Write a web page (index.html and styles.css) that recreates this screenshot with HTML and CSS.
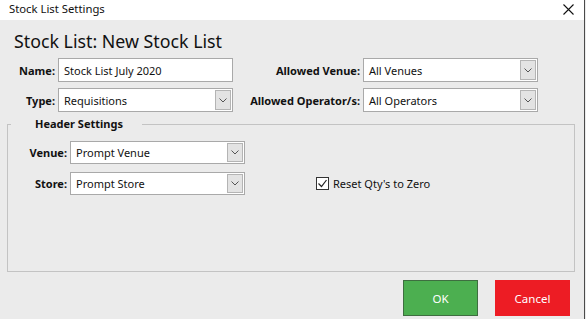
FILE: index.html
```html
<!DOCTYPE html>
<html lang="en">
<head>
    <meta charset="UTF-8">
    <meta name="viewport" content="width=device-width, initial-scale=1.0">
    <title>Stock List Settings</title>
    <link rel="stylesheet" href="styles.css">
</head>
<body>

    <div class="window">
        <div class="titlebar">
            <span class="title">Stock List Settings</span>
            <span class="close">
                <svg width="11" height="11" viewBox="0 0 11 11"><path d="M0.5 0.5 L10.5 10.5 M10.5 0.5 L0.5 10.5" stroke="#111" stroke-width="1.1" fill="none"/></svg>
            </span>
        </div>

        <div class="content">
            <h1 class="heading">Stock List: New Stock List</h1>

            <div class="top-form">
                <label class="lbl">Name:</label>
                <div class="field">Stock List July 2020</div>
                <label class="lbl">Allowed Venue:</label>
                <div class="field combo">
                    <span>All Venues</span>
                    <span class="drop"><svg width="8" height="5" viewBox="0 0 8 5"><path d="M0.5 0.5 L4 4 L7.5 0.5" stroke="#555" fill="none"/></svg></span>
                </div>

                <label class="lbl">Type:</label>
                <div class="field combo">
                    <span>Requisitions</span>
                    <span class="drop"><svg width="8" height="5" viewBox="0 0 8 5"><path d="M0.5 0.5 L4 4 L7.5 0.5" stroke="#555" fill="none"/></svg></span>
                </div>
                <label class="lbl">Allowed Operator/s:</label>
                <div class="field combo">
                    <span>All Operators</span>
                    <span class="drop"><svg width="8" height="5" viewBox="0 0 8 5"><path d="M0.5 0.5 L4 4 L7.5 0.5" stroke="#555" fill="none"/></svg></span>
                </div>
            </div>

            <fieldset class="group">
                <legend>Header Settings</legend>
                <div class="group-form">
                    <label class="lbl">Venue:</label>
                    <div class="field combo small">
                        <span>Prompt Venue</span>
                        <span class="drop"><svg width="8" height="5" viewBox="0 0 8 5"><path d="M0.5 0.5 L4 4 L7.5 0.5" stroke="#555" fill="none"/></svg></span>
                    </div>
                    <div></div>

                    <label class="lbl">Store:</label>
                    <div class="field combo small">
                        <span>Prompt Store</span>
                        <span class="drop"><svg width="8" height="5" viewBox="0 0 8 5"><path d="M0.5 0.5 L4 4 L7.5 0.5" stroke="#555" fill="none"/></svg></span>
                    </div>
                    <div class="check">
                        <span class="box"><svg width="11" height="11" viewBox="0 0 11 11"><path d="M1.5 5.5 L4.5 8.5 L9.5 2" stroke="#222" stroke-width="1.2" fill="none"/></svg></span>
                        <span>Reset Qty's to Zero</span>
                    </div>
                </div>
            </fieldset>

            <div class="footer">
                <button class="btn ok">OK</button>
                <button class="btn cancel">Cancel</button>
            </div>
        </div>
    </div>

</body>
</html>
```

FILE: styles.css
```css
body {
    margin: 0;
    background-color: #ebebeb;
    font-family: "Noto Sans", "Open Sans", sans-serif;
    font-size: 11px;
    color: #111;
}
.window {
    width: 584px;
    height: 319px;
    border-right: 1px solid #4a4a4a;
    background-color: #ebebeb;
}
.titlebar {
    height: 20px;
    background-color: #fff;
    display: flex;
    justify-content: space-between;
    align-items: flex-start;
}
.title {
    padding-left: 9px;
    line-height: 17px;
    font-size: 11.3px;
}
.close {
    padding: 3px 10px 0 0;
}
.heading {
    margin: 9px 0 5px 14px;
    font-size: 17.8px;
    font-weight: normal;
    line-height: 24px;
    color: #111;
}
.top-form {
    display: grid;
    grid-template-columns: 48px 175px 124px 175px;
    grid-auto-rows: 24px;
    column-gap: 3px;
    row-gap: 6px;
    padding-left: 7px;
}
.lbl {
    font-weight: bold;
    text-align: right;
    align-self: center;
    white-space: nowrap;
}
.field {
    background-color: #fff;
    border: 1px solid #a9a9a9;
    display: flex;
    align-items: center;
    justify-content: space-between;
    padding-left: 5px;
    box-sizing: border-box;
}
.combo {
    padding-right: 1px;
}
.drop {
    width: 16px;
    height: 20px;
    background-color: #e3e3e3;
    border: 1px solid #b4b4b4;
    box-sizing: border-box;
    display: flex;
    align-items: center;
    justify-content: center;
}
.small .drop {
    height: 19px;
}
.group {
    margin: 4px 0 0 7px;
    width: 568px;
    height: 156px;
    box-sizing: border-box;
    border: 1px solid #c3c3c3;
    padding: 0;
}
.group legend {
    margin-left: 3px;
    padding: 0 19px 0 24px;
    font-weight: bold;
    line-height: 16px;
}
.group-form {
    display: grid;
    grid-template-columns: 47px 175px auto;
    grid-auto-rows: 23px;
    column-gap: 3px;
    row-gap: 8px;
    margin-top: 9px;
    padding-left: 12px;
}
.check {
    display: flex;
    align-items: center;
    gap: 4px;
    margin-left: 68px;
}
.box {
    width: 13px;
    height: 13px;
    border: 1px solid #333;
    background-color: #fff;
    box-sizing: border-box;
    display: flex;
    align-items: center;
    justify-content: center;
}
.footer {
    display: flex;
    justify-content: flex-end;
    gap: 17px;
    padding-right: 14px;
    margin-top: 8px;
}
.btn {
    width: 75px;
    height: 36px;
    font-family: "Noto Sans", "Open Sans", sans-serif;
    font-size: 11.5px;
    color: #fff;
    border: none;
    cursor: pointer;
}
.ok {
    background-color: #4caf50;
    border: 1px solid #3e6e40;
}
.cancel {
    background-color: #ed1c24;
}
```
